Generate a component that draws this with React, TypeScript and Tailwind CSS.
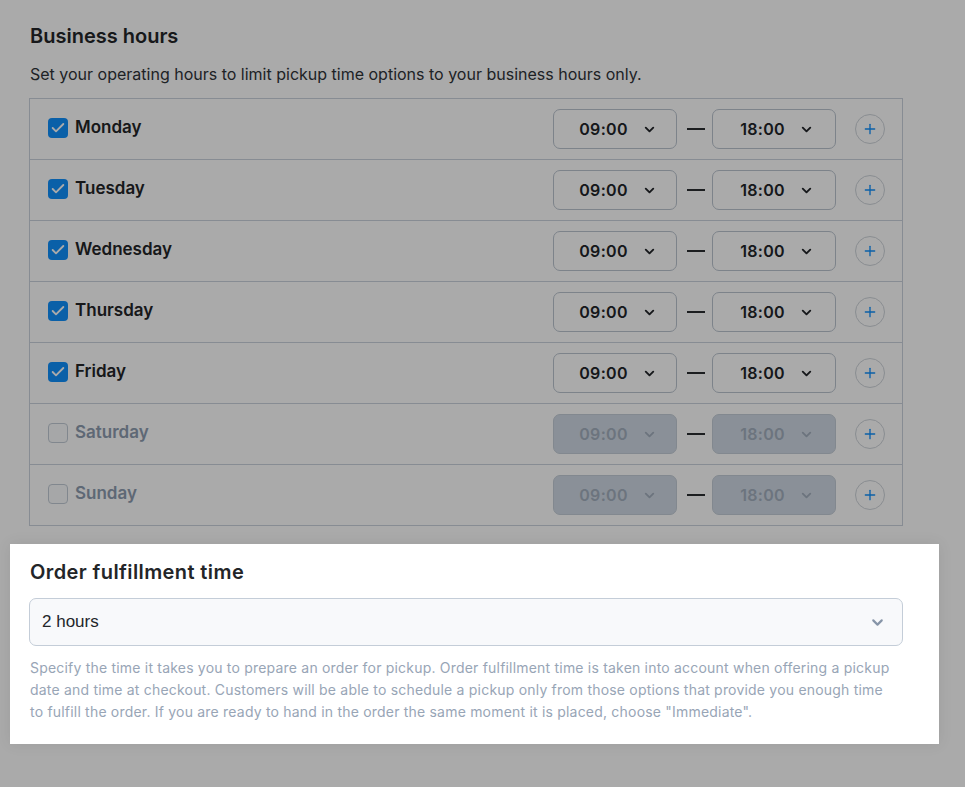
import { ChevronDown, Check, Plus } from 'lucide-react';

const days = [
  { name: 'Monday', on: true },
  { name: 'Tuesday', on: true },
  { name: 'Wednesday', on: true },
  { name: 'Thursday', on: true },
  { name: 'Friday', on: true },
  { name: 'Saturday', on: false },
  { name: 'Sunday', on: false },
];

function TimeSelect({ value, disabled }: { value: string; disabled: boolean }) {
  return (
    <div
      className={`w-[124px] h-[40px] rounded-[7px] border flex items-center justify-center gap-[14px] pl-[6px] text-[16px] font-semibold tracking-[0.3px] ${
        disabled
          ? 'bg-[#d0d9e4] border-[#c3ccd7] text-[#a3afbe]'
          : 'bg-white border-[#bcc5d0] text-[#222529]'
      }`}
    >
      <span>{value}</span>
      <ChevronDown size={15} strokeWidth={3} />
    </div>
  );
}

export default function App() {
  return (
    <div className="min-h-screen bg-white font-['Inter',sans-serif] pt-[24px]">
      <div className="pl-[30px] pr-[62px]">
        <h2 className="text-[20px] leading-[24px] font-semibold text-[#232528]">Business hours</h2>
        <p className="mt-[15px] text-[16px] leading-[22px] text-[#2f3338]">
          Set your operating hours to limit pickup time options to your business hours only.
        </p>
        <div className="mt-[13px] -ml-[1px] border border-[#cbd3dd]">
          {days.map((d, i) => (
            <div
              key={d.name}
              className={`flex items-center pl-[18px] pr-[17px] ${i > 0 ? 'h-[61px] border-t border-[#cbd3dd]' : 'h-[60px]'}`}
            >
              <div className="flex items-center gap-[7px] flex-1 -mt-[3px]">
                {d.on ? (
                  <span className="w-[20px] h-[20px] rounded-[4px] bg-[#1090fd] flex items-center justify-center text-white">
                    <Check size={16} strokeWidth={2.8} />
                  </span>
                ) : (
                  <span className="w-[20px] h-[20px] rounded-[4px] border border-[#c2cbd6] bg-[#fafbfc]" />
                )}
                <span
                  className={`text-[17px] font-semibold ${d.on ? 'text-[#232528]' : 'text-[#8e9cb0]'}`}
                >
                  {d.name}
                </span>
              </div>
              <TimeSelect value="09:00" disabled={!d.on} />
              <span className="ml-[10px] mr-[7px] w-[18px] h-[2px] bg-[#2a2d31]" />
              <TimeSelect value="18:00" disabled={!d.on} />
              <span className="ml-[19px] w-[30px] h-[30px] rounded-full border border-[#cfd4da] flex items-center justify-center text-[#1090fd]">
                <Plus size={16} strokeWidth={2} />
              </span>
            </div>
          ))}
        </div>
      </div>

      <div className="relative z-10 mt-[18px] ml-[10px] w-[929px] bg-white pt-[16px] pb-[21px] pl-[20px] pr-[36px] shadow-[0_0_14px_rgba(0,0,0,0.08),0_0_0_9999px_rgba(0,0,0,0.335)]">
        <h2 className="text-[20px] leading-[24px] font-semibold tracking-[0.4px] text-[#232528]">Order fulfillment time</h2>
        <div className="mt-[14px] -ml-[1px] h-[48px] rounded-[7px] border border-[#c4cdd8] bg-[#f8f9fb] flex items-center pl-[12px] pr-[16px]">
          <span className="flex-1 text-[17px] text-[#23262a] font-['Liberation_Sans',sans-serif]">2 hours</span>
          <ChevronDown size={17} strokeWidth={3} className="text-[#8795a8]" />
        </div>
        <p className="mt-[11px] pr-[10px] text-[14px] leading-[22px] tracking-[0.2px] text-[#98a5b6]">
          Specify the time it takes you to prepare an order for pickup. Order fulfillment time is taken into account when offering a pickup date and time at checkout. Customers will be able to schedule a pickup only from those options that provide you enough time to fulfill the order. If you are ready to hand in the order the same moment it is placed, choose "Immediate".
        </p>
      </div>
    </div>
  );
}
